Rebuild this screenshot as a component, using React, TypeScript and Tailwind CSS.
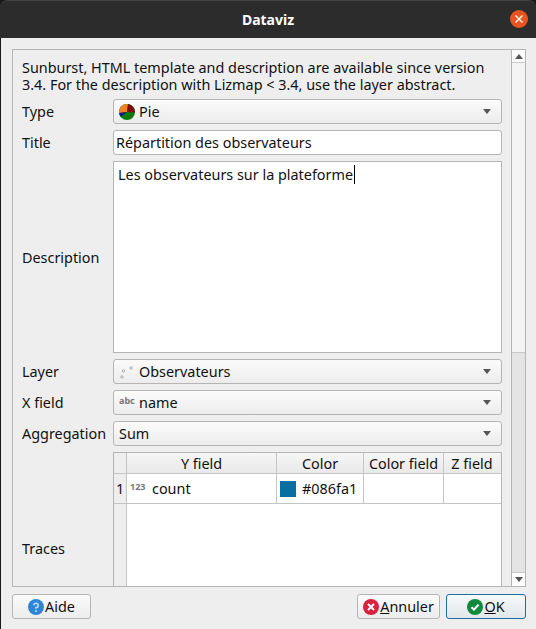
import React from "react";

const font = "font-['Noto_Sans','Open_Sans',sans-serif]";

function Arrow() {
  return <div className="w-0 h-0 border-x-[4px] border-x-transparent border-t-[5px] border-t-[#555]" />;
}

function Combo({ icon, label }: { icon?: React.ReactNode; label: string }) {
  return (
    <div className="h-[25px] flex items-center rounded-[3px] border border-[#b5b5b5] bg-gradient-to-b from-[#fbfbfb] to-[#ececec] pl-[5px] pr-[10px]">
      {icon}
      <span className="flex-1 truncate">{label}</span>
      <Arrow />
    </div>
  );
}

function Row({ label, children }: { label: string; children: React.ReactNode }) {
  return (
    <div className="flex items-center">
      <div className="w-[100px] shrink-0 pl-[9px]">{label}</div>
      <div className="flex-1 min-w-0">{children}</div>
    </div>
  );
}

function PieIcon() {
  return (
    <svg width="16" height="16" viewBox="0 0 16 16" className="mr-[4px] shrink-0">
      <circle cx="8" cy="8" r="8" fill="#0b7a0b" />
      <path d="M8 8 L0.1 9 A8 8 0 0 1 9 0.1 Z" fill="#f58220" />
      <path d="M8 8 L9 0.1 A8 8 0 0 1 16 8.5 Z" fill="#7a0f0f" />
      <path d="M8 8 L0.1 9 A8 8 0 0 0 1.6 12.8 Z" fill="#10108a" />
    </svg>
  );
}

function PointsIcon() {
  return (
    <svg width="16" height="16" viewBox="0 0 16 16" className="mr-[4px] shrink-0" fill="#fff" stroke="#999" strokeWidth="0.8">
      <circle cx="4.5" cy="7" r="1.2" />
      <circle cx="12" cy="4" r="1.2" />
      <circle cx="3" cy="13" r="1.2" />
    </svg>
  );
}

function FieldTag({ text }: { text: string }) {
  return <span className="w-[19px] mr-[1px] shrink-0 text-[9px] font-bold leading-none text-[#777] -translate-y-[2px]">{text}</span>;
}

function Table() {
  const headClass =
    "flex items-center justify-center border-r border-[#c4c4c4] bg-gradient-to-b from-[#f6f6f6] to-[#e9e9e9]";
  return (
    <div className="h-[192px] border-x border-t border-[#b5b5b5] bg-white overflow-hidden">
      <div className="flex h-[21px] border-b border-[#c4c4c4] bg-[#eeeeee]">
        <div className="w-[13px] border-r border-[#c4c4c4] bg-[#eeeeee]" />
        <div className={`${headClass} w-[150px]`}>Y field</div>
        <div className={`${headClass} w-[87px]`}>Color</div>
        <div className={`${headClass} w-[80px]`}>Color field</div>
        <div className={`${headClass} w-[56px] border-r-0`}>Z field</div>
      </div>
      <div className="flex h-[30px] border-b border-[#c4c4c4]">
        <div className="w-[13px] flex items-center justify-center border-r border-[#c4c4c4] bg-[#eeeeee]">1</div>
        <div className="w-[150px] flex items-center pl-[3px] border-r border-[#c4c4c4]">
          <FieldTag text="123" />
          <span className="ml-[2px]">count</span>
        </div>
        <div className="w-[87px] flex items-center pl-[3px] border-r border-[#c4c4c4]">
          <div className="w-[16px] h-[16px] mr-[6px] bg-[#086fa1]" />
          <span>#086fa1</span>
        </div>
        <div className="w-[80px] border-r border-[#c4c4c4]" />
        <div className="w-[56px]" />
      </div>
      <div className="w-[13px] h-full bg-[#eeeeee] border-r border-[#c4c4c4]" />
    </div>
  );
}

function Scrollbar() {
  return (
    <div className="w-[14px] shrink-0 flex flex-col border-l border-[#b5b5b5] bg-[#e4e4e4]">
      <div className="h-[13px] bg-white border-b border-[#c9c9c9] flex items-center justify-center">
        <div className="w-0 h-0 border-x-[4px] border-x-transparent border-b-[5px] border-b-[#555]" />
      </div>
      <div className="h-[290px] bg-[#f4f4f4] border-b border-[#c9c9c9]" />
      <div className="flex-1" />
      <div className="h-[14px] bg-white border-t border-[#c9c9c9] flex items-center justify-center">
        <Arrow />
      </div>
    </div>
  );
}

function DialogButton({
  icon,
  children,
  primary,
  className,
}: {
  icon: React.ReactNode;
  children: React.ReactNode;
  primary?: boolean;
  className: string;
}) {
  return (
    <div
      className={`h-[25px] flex items-center justify-center gap-[1px] rounded-[3px] border bg-gradient-to-b ${
        primary ? "border-[#1d6f9f] from-[#f6f9fa] to-[#e2e7ea]" : "border-[#b5b5b5] from-[#fbfbfb] to-[#ececec]"
      } ${className}`}
    >
      {icon}
      <span>{children}</span>
    </div>
  );
}

function HelpIcon() {
  return (
    <svg width="16" height="16" viewBox="0 0 16 16">
      <circle cx="8" cy="8" r="8" fill="#2f86d6" />
      <path d="M5.8 6.2 A2.2 2.2 0 1 1 8 8.6 V9.8" fill="none" stroke="#bcdcf5" strokeWidth="1.5" />
      <circle cx="8" cy="12" r="1" fill="#bcdcf5" />
    </svg>
  );
}

function CancelIcon() {
  return (
    <svg width="16" height="16" viewBox="0 0 16 16">
      <circle cx="8" cy="8" r="8" fill="#d8203f" />
      <path d="M5 5 L11 11 M11 5 L5 11" stroke="#fff" strokeWidth="2" />
    </svg>
  );
}

function OkIcon() {
  return (
    <svg width="16" height="16" viewBox="0 0 16 16">
      <circle cx="8" cy="8" r="8" fill="#0f8a3c" />
      <path d="M4.5 8.2 L7 10.6 L11.5 5.8" fill="none" stroke="#fff" strokeWidth="2" />
    </svg>
  );
}

export default function App() {
  return (
    <div className={`${font} w-[536px] h-[629px] bg-[#1a1a1a] text-[14.4px] leading-[17px] text-[#111] overflow-hidden`}>
      <div className="h-[38px] relative flex items-center justify-center bg-[#2c2c2c] rounded-t-[8px] border-t border-[#444] text-[14px] text-white font-bold">
        Dataviz
        <div className="absolute right-[8px] top-[9px] w-[18px] h-[18px] rounded-full bg-[#e95420] flex items-center justify-center">
          <svg width="10" height="10" viewBox="0 0 10 10">
            <path d="M1.5 1.5 L8.5 8.5 M8.5 1.5 L1.5 8.5" stroke="#fff" strokeWidth="1.4" />
          </svg>
        </div>
      </div>

      <div className="h-[591px] ml-[1px] bg-[#eeeeee] flex flex-col pl-[11px] pr-[10px] pt-[11px]">
        <div className="h-[538px] shrink-0 flex border border-[#b5b5b5] overflow-hidden">
          <div className="flex-1 min-w-0 flex flex-col pr-[9px]">
            <p className="pl-[9px] pt-[9px] pb-[6px] whitespace-nowrap">
              Sunburst, HTML template and description are available since version
              <br />
              3.4. For the description with Lizmap &lt; 3.4, use the layer abstract.
            </p>
            <div className="flex flex-col gap-[6px]">
              <Row label="Type">
                <Combo icon={<PieIcon />} label="Pie" />
              </Row>
              <Row label="Title">
                <div className="h-[25px] flex items-center rounded-[3px] border border-[#b5b5b5] bg-white pl-[2px]">
                  Répartition des observateurs
                </div>
              </Row>
              <Row label="Description">
                <div className="h-[192px] border border-[#b5b5b5] bg-white pl-[4px] pt-[4px]">
                  Les observateurs sur la plateforme<span className="border-l border-black ml-[1px]" />
                </div>
              </Row>
              <Row label="Layer">
                <Combo icon={<PointsIcon />} label="Observateurs" />
              </Row>
              <Row label="X field">
                <Combo icon={<FieldTag text="abc" />} label="name" />
              </Row>
              <Row label="Aggregation">
                <Combo label="Sum" />
              </Row>
              <Row label="Traces">
                <Table />
              </Row>
            </div>
          </div>
          <Scrollbar />
        </div>

        <div className="mt-[7px] flex">
          <DialogButton icon={<HelpIcon />} className="w-[79px]">Aide</DialogButton>
          <div className="flex-1" />
          <DialogButton icon={<CancelIcon />} className="w-[83px] mr-[6px]">
            <span className="underline">A</span>nnuler
          </DialogButton>
          <DialogButton icon={<OkIcon />} primary className="w-[80px]">
            <span className="underline">O</span>K
          </DialogButton>
        </div>
      </div>
    </div>
  );
}
